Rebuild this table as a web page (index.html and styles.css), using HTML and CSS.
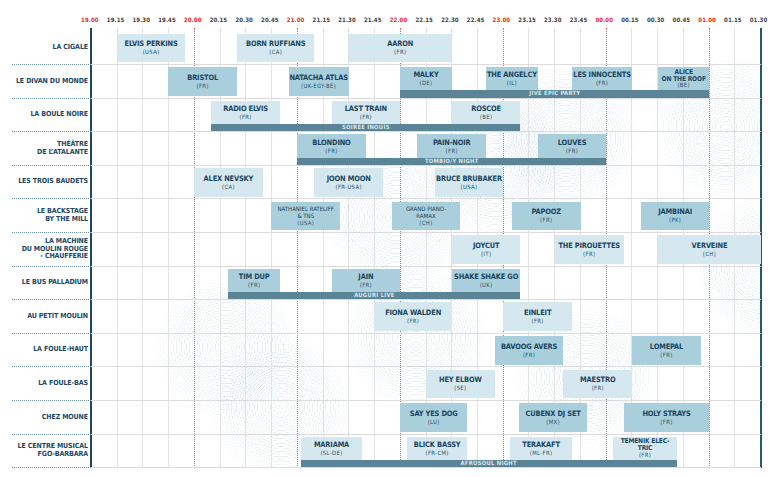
FILE: index.html
```html
<!DOCTYPE html>
<html lang="fr">
<head>
<meta charset="utf-8">
<title>Programme</title>
<link rel="stylesheet" href="styles.css">
</head>
<body>
<div class="sched">
  <div class="head">
    <span class="hr">19.00</span><span>19.15</span><span>19.30</span><span>19.45</span>
    <span class="hr">20.00</span><span>20.15</span><span>20.30</span><span>20.45</span>
    <span class="hr">21.00</span><span>21.15</span><span>21.30</span><span>21.45</span>
    <span class="hr">22.00</span><span>22.15</span><span>22.30</span><span>22.45</span>
    <span class="hr">23.00</span><span>23.15</span><span>23.30</span><span>23.45</span>
    <span class="hr">00.00</span><span>00.15</span><span>00.30</span><span>00.45</span>
    <span class="hr">01.00</span><span>01.15</span><span>01.30</span>
  </div>
  <div class="body">
    <div class="decor">
      <i class="c" style="left:60px;top:240px"></i>
      <i class="c" style="left:115px;top:300px"></i>
      <i class="c" style="left:230px;top:110px"></i>
      <i class="c" style="left:330px;top:60px"></i>
      <i class="c" style="left:400px;top:30px"></i>
      <i class="c" style="left:560px;top:20px"></i>
      <i class="c" style="left:600px;top:160px"></i>
      <i class="c" style="left:420px;top:270px"></i>
      <i class="c" style="left:250px;top:230px"></i>
    </div>
    <div class="vlines">
      <span class="h0"></span><span></span><span></span><span></span>
      <span class="h"></span><span></span><span></span><span></span>
      <span class="h"></span><span></span><span></span><span></span>
      <span class="h"></span><span></span><span></span><span></span>
      <span class="h"></span><span></span><span></span><span></span>
      <span class="h"></span><span></span><span></span><span></span>
      <span class="h"></span><span></span>
    </div>

    <div class="row light">
      <div class="venue">LA CIGALE</div>
      <div class="track">
        <div class="b" style="grid-column:16/56"><b>ELVIS PERKINS</b><i>(USA)</i></div>
        <div class="b" style="grid-column:86/131"><b>BORN RUFFIANS</b><i>(CA)</i></div>
        <div class="b" style="grid-column:151/211"><b>AARON</b><i>(FR)</i></div>
      </div>
    </div>

    <div class="row med">
      <div class="venue">LE DIVAN DU MONDE</div>
      <div class="track">
        <div class="b" style="grid-column:46/86"><b>BRISTOL</b><i>(FR)</i></div>
        <div class="b" style="grid-column:116/151"><b>NATACHA ATLAS</b><i>(UK-EGY-BE)</i></div>
        <div class="b up" style="grid-column:181/211"><b>MALKY</b><i>(DE)</i></div>
        <div class="b up" style="grid-column:231/261"><b>THE ANGELCY</b><i>(IL)</i></div>
        <div class="b up" style="grid-column:281/316"><b>LES INNOCENTS</b><i>(FR)</i></div>
        <div class="b up two" style="grid-column:331/361"><b>ALICE<br>ON THE ROOF</b><i>(BE)</i></div>
        <div class="bar" style="grid-column:181/361">JIVE EPIC PARTY</div>
      </div>
    </div>

    <div class="row light">
      <div class="venue">LA BOULE NOIRE</div>
      <div class="track">
        <div class="b up" style="grid-column:71/111"><b>RADIO ELVIS</b><i>(FR)</i></div>
        <div class="b up" style="grid-column:141/181"><b>LAST TRAIN</b><i>(FR)</i></div>
        <div class="b up" style="grid-column:211/251"><b>ROSCOE</b><i>(BE)</i></div>
        <div class="bar" style="grid-column:71/251">SOIRÉE INOUÏS</div>
      </div>
    </div>

    <div class="row med">
      <div class="venue">THÉÂTRE<br>DE L’ATALANTE</div>
      <div class="track">
        <div class="b up" style="grid-column:121/161"><b>BLONDINO</b><i>(FR)</i></div>
        <div class="b up" style="grid-column:191/231"><b>PAIN-NOIR</b><i>(FR)</i></div>
        <div class="b up" style="grid-column:261/301"><b>LOUVES</b><i>(FR)</i></div>
        <div class="bar" style="grid-column:121/301">TOMBIO/Y NIGHT</div>
      </div>
    </div>

    <div class="row light">
      <div class="venue">LES TROIS BAUDETS</div>
      <div class="track">
        <div class="b" style="grid-column:61/101"><b>ALEX NEVSKY</b><i>(CA)</i></div>
        <div class="b" style="grid-column:131/171"><b>JOON MOON</b><i>(FR-USA)</i></div>
        <div class="b" style="grid-column:201/241"><b>BRUCE BRUBAKER</b><i>(USA)</i></div>
      </div>
    </div>

    <div class="row med">
      <div class="venue">LE BACKSTAGE<br>BY THE MILL</div>
      <div class="track">
        <div class="b sm" style="grid-column:106/146"><b>NATHANIEL RATELIFF<br>&amp; TNS</b><i>(USA)</i></div>
        <div class="b sm" style="grid-column:176/216"><b>GRAND PIANO-<br>RAMAX</b><i>(CH)</i></div>
        <div class="b" style="grid-column:246/286"><b>PAPOOZ</b><i>(FR)</i></div>
        <div class="b" style="grid-column:321/361"><b>JAMBINAI</b><i>(PK)</i></div>
      </div>
    </div>

    <div class="row light">
      <div class="venue">LA MACHINE<br>DU MOULIN ROUGE<br>- CHAUFFERIE</div>
      <div class="track">
        <div class="b" style="grid-column:211/251"><b>JOYCUT</b><i>(IT)</i></div>
        <div class="b" style="grid-column:271/311"><b>THE PIROUETTES</b><i>(FR)</i></div>
        <div class="b" style="grid-column:331/391"><b>VERVEINE</b><i>(CH)</i></div>
      </div>
    </div>

    <div class="row med">
      <div class="venue">LE BUS PALLADIUM</div>
      <div class="track">
        <div class="b up" style="grid-column:81/111"><b>TIM DUP</b><i>(FR)</i></div>
        <div class="b up" style="grid-column:141/181"><b>JAIN</b><i>(FR)</i></div>
        <div class="b up" style="grid-column:211/251"><b>SHAKE SHAKE GO</b><i>(UK)</i></div>
        <div class="bar" style="grid-column:81/251">AUGURI LIVE</div>
      </div>
    </div>

    <div class="row light">
      <div class="venue">AU PETIT MOULIN</div>
      <div class="track">
        <div class="b" style="grid-column:166/211"><b>FIONA WALDEN</b><i>(FR)</i></div>
        <div class="b" style="grid-column:241/281"><b>EINLEIT</b><i>(FR)</i></div>
      </div>
    </div>

    <div class="row med">
      <div class="venue">LA FOULE-HAUT</div>
      <div class="track">
        <div class="b" style="grid-column:236/276"><b>BAVOOG AVERS</b><i>(FR)</i></div>
        <div class="b" style="grid-column:316/356"><b>LOMEPAL</b><i>(FR)</i></div>
      </div>
    </div>

    <div class="row light">
      <div class="venue">LA FOULE-BAS</div>
      <div class="track">
        <div class="b" style="grid-column:196/236"><b>HEY ELBOW</b><i>(SE)</i></div>
        <div class="b" style="grid-column:276/316"><b>MAESTRO</b><i>(FR)</i></div>
      </div>
    </div>

    <div class="row med">
      <div class="venue">CHEZ MOUNE</div>
      <div class="track">
        <div class="b" style="grid-column:181/220"><b>SAY YES DOG</b><i>(LU)</i></div>
        <div class="b" style="grid-column:250/290"><b>CUBENX DJ SET</b><i>(MX)</i></div>
        <div class="b" style="grid-column:311/361"><b>HOLY STRAYS</b><i>(FR)</i></div>
      </div>
    </div>

    <div class="row light">
      <div class="venue">LE CENTRE MUSICAL<br>FGO-BARBARA</div>
      <div class="track">
        <div class="b up" style="grid-column:123/159"><b>MARIAMA</b><i>(SL-DE)</i></div>
        <div class="b up" style="grid-column:185/220"><b>BLICK BASSY</b><i>(FR-CM)</i></div>
        <div class="b up" style="grid-column:245/281"><b>TERAKAFT</b><i>(ML-FR)</i></div>
        <div class="b up two" style="grid-column:305/342"><b>TEMENIK ELEC-<br>TRIC</b><i>(FR)</i></div>
        <div class="bar" style="grid-column:123/342">AFROSOUL NIGHT</div>
      </div>
    </div>
  </div>
</div>
</body>
</html>
```

FILE: styles.css
```css
* { box-sizing: border-box; }
html, body { margin: 0; padding: 0; background: #fff; }
body {
  width: 775px;
  height: 477px;
  overflow: hidden;
  font-family: "DejaVu Sans Condensed", "DejaVu Sans", sans-serif;
  color: #1e4862;
}
.sched { width: 775px; }

.head {
  height: 31.5px;
  display: flex;
  padding-left: 77px;
  padding-top: 15.5px;
}
.head span {
  flex: 0 0 25.73px;
  text-align: center;
  font-size: 6px;
  line-height: 7px;
  font-weight: bold;
  color: #3d3d3d;
  letter-spacing: 0.1px;
}
.head span.hr { color: #e5281c; }

.body { position: relative; }

.decor {
  position: absolute;
  left: 91px;
  top: 0;
  width: 670px;
  height: 436.5px;
  overflow: hidden;
  z-index: 0;
}
.decor .c {
  position: absolute;
  width: 150px;
  height: 150px;
  border-radius: 50%;
  background: repeating-radial-gradient(circle at center, rgba(130, 175, 198, 0.2) 0 0.6px, transparent 0.7px 2.6px);
  -webkit-mask-image: radial-gradient(circle at center, #000 0 45%, transparent 70%);
  mask-image: radial-gradient(circle at center, #000 0 45%, transparent 70%);
}

.vlines {
  position: absolute;
  left: 91px;
  top: -3.5px;
  width: 671px;
  height: 440px;
  display: flex;
  border-right: 2px solid #24586f;
  z-index: 1;
}
.vlines span {
  flex: 1 1 0;
  border-left: 1px solid #e3e3e3;
}
.vlines span.h { border-left: 1px dotted #ee6652; }
.vlines span.h0 {
  border-left: 2px solid #1c4862;
  margin-left: -1px;
}

.row {
  position: relative;
  z-index: 2;
  display: flex;
  height: 33.6px;
}
.venue {
  flex: 0 0 79px;
  margin-left: 12px;
  display: flex;
  align-items: center;
  justify-content: flex-end;
  text-align: right;
  padding-right: 3px;
  font-size: 7px;
  line-height: 7.6px;
  font-weight: bold;
  letter-spacing: -0.1px;
  white-space: nowrap;
  color: #1b4763;
  border-bottom: 1px dotted #7093a7;
}
.track {
  flex: 0 0 670px;
  display: grid;
  grid-template-columns: repeat(390, 1fr);
  grid-template-rows: 1fr 7.3px;
  padding-top: 2.2px;
  border-bottom: 1px solid #dcdcdc;
}

.b {
  grid-row: 1 / 3;
  margin-bottom: 1.8px;
  display: flex;
  flex-direction: column;
  align-items: center;
  justify-content: center;
  text-align: center;
  min-width: 0;
  overflow: hidden;
  white-space: nowrap;
}
.b.up { grid-row: 1; margin-bottom: 0; }
.light .b { background: #d5e8f0; }
.med .b { background: #a9cfdc; }
.b b {
  font-size: 7.4px;
  line-height: 7.4px;
  font-weight: bold;
  letter-spacing: -0.15px;
  color: #1a4560;
}
.b i {
  font-style: normal;
  font-size: 5.8px;
  line-height: 6px;
  margin-top: 1.6px;
  color: #24516b;
  letter-spacing: 0.4px;
}
.b.sm b {
  font-size: 6px;
  line-height: 7px;
  font-weight: normal;
  letter-spacing: 0;
  color: #173f58;
}
.b.sm i { margin-top: 1px; }
.b.two b { font-size: 6.6px; line-height: 7px; }
.b.two i { margin-top: 0.6px; line-height: 5.6px; }

.bar {
  grid-row: 2;
  background: #5c8497;
  color: #d8e7ee;
  font-size: 5.8px;
  line-height: 7.3px;
  font-weight: bold;
  text-align: center;
  letter-spacing: 0.3px;
  white-space: nowrap;
  overflow: hidden;
}
```
